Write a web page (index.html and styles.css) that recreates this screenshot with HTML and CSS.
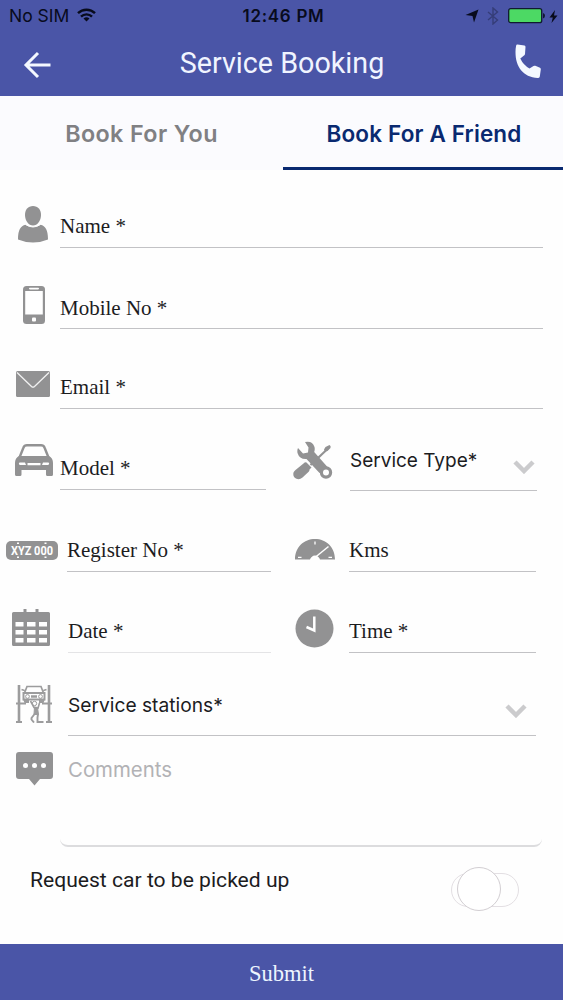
FILE: index.html
```html
<!DOCTYPE html>
<html lang="en">

<head>
    <meta charset="UTF-8">
    <meta name="viewport" content="width=device-width, initial-scale=1.0">
    <title>Service Booking</title>
    <link rel="stylesheet" href="styles.css">
</head>

<body>
    <header>
        <div class="status-bar">
            <div class="carrier">
                <span>No SIM</span>
                <svg width="19" height="14" viewBox="0 0 19 14" fill="none" stroke="#080b1c" stroke-width="2.4">
                    <path d="M1 5.2a12.2 12.2 0 0 1 17 0M4 8.6a7.8 7.8 0 0 1 11 0" />
                    <path d="M9.5 13.6l-3-3a4.3 4.3 0 0 1 6 0z" fill="#080b1c" stroke="none" />
                </svg>
            </div>
            <div class="clock">12:46 PM</div>
            <div class="indicators">
                <svg width="14" height="14" viewBox="0 0 14 14" fill="#080b1c">
                    <path d="M13.5 .5L9 13.5 7.5 7 .5 6z" />
                </svg>
                <svg class="bluetooth" width="12" height="18" viewBox="0 0 12 18" fill="none" stroke="#353d78" stroke-width="1.4">
                    <path d="M1 5l9.5 8L6 17V1l4.5 4L1 13" />
                </svg>
                <svg class="battery" width="37" height="16" viewBox="0 0 37 16">
                    <rect x=".7" y=".7" width="33" height="14" rx="2" fill="#4cd964" stroke="#101a30" stroke-width="1.3" />
                    <path d="M35 5q2 .5 2 2.700t-2 2.700z" fill="#101a30" />
                </svg>
                <svg width="9" height="13" viewBox="0 0 9 13" fill="#080b1c">
                    <path d="M6 0L.5 7.5h3.300L2.500 13l6-7.5H5z" />
                </svg>
            </div>
        </div>
        <div class="nav-bar">
            <svg class="back" width="28" height="28" viewBox="0 0 28 28" fill="none" stroke="#f4f8ff" stroke-width="3">
                <path d="M27.5 14H3M15 2L3 14l12 12" />
            </svg>
            <h1>Service Booking</h1>
            <svg class="call" width="26" height="36" viewBox="0 0 26 36" fill="#f4f8ff">
                <path d="M2.500 .5l7 1q1 .3 1 1.500l-.5 7q-.2 1-1 1.500l-3.700 3q3 6.500 9.200 10l4-2.500q.8-.6 1.800-.2l4.700 2q1 .5.8 1.600l-1 7q-.3 1.600-2 1.600C8 33 .5 23 .5 8q0-3.500.6-6.300Q1.300.4 2.500.5z" />
            </svg>
        </div>
    </header>

    <nav class="tabs">
        <a class="tab">Book For You</a>
        <a class="tab active">Book For A Friend</a>
    </nav>

    <form>
        <div class="row row-name">
            <div class="icon">
                <svg class="i-user" width="30" height="37" viewBox="0 0 30 37">
                    <path d="M15 0c5 0 8 3.500 8 9s-3.500 10.500-8 10.500S7 14.500 7 9s3-9 8-9z" />
                    <path d="M7.500 18.800q7.500 4.500 15 0c5 1.300 7.500 5 7.500 14.700Q23 36.500 15 36.500T0 33.500C0 24 2.500 20.100 7.500 18.800z" />
                    <path d="M7.500 18.500q7.500 5 15 0" fill="none" stroke="#fff" stroke-width="1" />
                </svg>
            </div>
            <div class="field">Name *</div>
        </div>

        <div class="row row-mobile">
            <div class="icon">
                <svg class="i-phone" width="22" height="38" viewBox="0 0 22 38">
                    <rect width="22" height="38" rx="3.500" />
                    <path d="M2.200 5h17.600v23.500H2.200z" fill="#fff" />
                    <rect x="6" y="1.800" width="10" height="1.600" rx=".8" fill="#fff" />
                    <rect x="9" y="31.500" width="4" height="4" rx="1" fill="#fff" />
                </svg>
            </div>
            <div class="field">Mobile No *</div>
        </div>

        <div class="row row-email">
            <div class="icon">
                <svg class="i-mail" width="34" height="26" viewBox="0 0 34 26">
                    <rect width="34" height="26" rx="1.500" />
                    <path d="M1 1.500l14.500 14q1.500 1.300 3 0L33 1.500" fill="none" stroke="#f2f2f2" stroke-width="1.300" />
                </svg>
            </div>
            <div class="field">Email *</div>
        </div>

        <div class="row row-model">
            <div class="icon">
                <svg class="i-car" width="38" height="32" viewBox="0 0 38 32">
                    <path d="M4.500 13.500L8.500 3.500Q9.300 1.300 12 1.300h14q2.700 0 3.500 2.200l4 10" fill="none" stroke="#929293" stroke-width="2.400" />
                    <path d="M4 12h30q4 2 4 7v11.500q0 1.500-1.500 1.500h-4q-1.500 0-1.500-1.500V26H6.500v4.500Q6.500 32 5 32H1.500Q0 32 0 30.500V19q0-5 4-7z" />
                    <path d="M4.500 18.500h5.500l1 2.500H5q-2-1-.5-2.500zM33.500 18.500H28L27 21h6q2-1 .5-2.500zM12.500 19h13v2.200h-13z" fill="#fff" />
                </svg>
            </div>
            <div class="field">Model *</div>
            <div class="icon">
                <svg class="i-tools" width="40" height="39" viewBox="0 0 40 39">
                    <path d="M35 7.500L17.500 24" fill="none" stroke="#929293" stroke-width="2.200" />
                    <path d="M31 8.500l1.500-2.500 4-2q1.800.8 1 3l-3 3-2.500.5z" />
                    <path d="M13.500 21.500l5 5-2 2q.2 1-.8 2.200L9.500 36.500q-3 2.500-6 1.300Q-.5 36 .5 31.500q.6-1.500 2-2.500l8-6.500q1.600-1.600 3-1z" />
                    <path d="M10 12.500l5-1L15.500 6.500 12 1Q19.500-.5 21.500 6q.6 2.500-.3 5L34.500 26l-8 6L13.500 18Q6.500 18.500 4.500 12 4 9 5 7z" />
                    <circle cx="33" cy="31.500" r="4.600" fill="#fff" stroke="#929293" stroke-width="3.2" />
                </svg>
            </div>
            <div class="field select">
                <span>Service Type*</span>
                <svg width="22" height="15" viewBox="0 0 22 15"><path d="M2 3l9 9 9-9" /></svg>
            </div>
        </div>

        <div class="row row-register">
            <div class="icon">
                <svg class="i-plate" width="52" height="19" viewBox="0 0 52 19">
                    <rect width="52" height="19" rx="5" />
                    <text x="26" y="13.800" text-anchor="middle" textLength="42" lengthAdjust="spacingAndGlyphs">XYZ 000</text>
                    <path d="M11 1.500h2v1.500h-2zM38.500 1.500h2v1.500h-2zM11 15.500h2V17h-2zM38.500 15.500h2V17h-2z" fill="#fff" />
                </svg>
            </div>
            <div class="field">Register No *</div>
            <div class="icon">
                <svg class="i-gauge" width="40" height="21" viewBox="0 0 40 21">
                    <path d="M0 20.500C0 8 9 0 20 0s20 8 20 20.500H25q-.6-3-5-3t-5 3z" />
                    <path d="M20 18.500L33.500 7.500" stroke="#fff" stroke-width="1.500" />
                    <path d="M3 18.300h3.500M33.500 18.300H37M20 2.500v3" stroke="#fff" stroke-width="1.300" />
                    <path d="M16 21q0-4.500 4-4.500t4 4.500z" fill="#fff" />
                </svg>
            </div>
            <div class="field">Kms</div>
        </div>

        <div class="row row-date">
            <div class="icon">
                <svg class="i-calendar" width="38" height="38" viewBox="0 0 38 38">
                    <path d="M1.500 4H11.500V1h3v3h9V1h3v3h10Q38 4 38 5.500v31q0 1.500-1.500 1.500h-35Q0 38 0 36.500v-31Q0 4 1.500 4z" />
                    <path d="M3.500 14h8v4.500h-8zM15 14h8.500v4.500H15zM27 14h8v4.500h-8zM3.500 22h8v4.500h-8zM15 22h8.500v4.500H15zM27 22h8v4.500h-8zM3.500 30h8v4.500h-8zM15 30h8.500v4.500H15zM27 30h8v4.500h-8z" fill="#fff" />
                </svg>
            </div>
            <div class="field faint">Date *</div>
            <div class="icon">
                <svg class="i-clock" width="39" height="39" viewBox="0 0 39 39">
                    <circle cx="19.500" cy="19.500" r="19" />
                    <path d="M19.300 7.500v14L11.500 18" fill="none" stroke="#fff" stroke-width="2.500" />
                </svg>
            </div>
            <div class="field">Time *</div>
        </div>

        <div class="row row-stations">
            <div class="icon">
                <svg class="i-lift" width="36" height="38" viewBox="0 0 36 38" fill="none" stroke="#9c9c9d">
                    <path d="M3 0v37M33 0v37" stroke-width="2.600" />
                    <path d="M0 37h6M30 37h6" stroke-width="2" />
                    <path d="M0 18.500h10M36 18.500H26" stroke-width="1.800" />
                    <path d="M8.500 8l2.500-6.500h14l2.500 6.500M5.500 4.500l3 1M30.500 4.500l-3 1" stroke-width="1.700" />
                    <path d="M7.500 8h21v6.500h-21z" stroke-width="2" />
                    <path d="M7 14h6v4H8.500zM23 14h6l-1.500 4H23z" fill="#9c9c9d" stroke="none" />
                    <circle cx="11.500" cy="11.500" r="1.900" />
                    <circle cx="24.500" cy="11.500" r="1.900" />
                    <path d="M15 11.500h6" stroke-width="2.500" />
                    <circle cx="18.500" cy="18.500" r="2.200" />
                    <path d="M14.500 16l3.500 6.500 4 .5 1.500-5" stroke-width="1.600" />
                    <path d="M18.500 22l3 .5 1 7h-4.500z" fill="#9c9c9d" />
                    <path d="M19 28.500l-3.500 4.500v1.500l2.500 3M22 29l-.5 3.500v4.500h6" stroke-width="1.900" />
                </svg>
            </div>
            <div class="field select">
                <span>Service stations*</span>
                <svg width="22" height="15" viewBox="0 0 22 15"><path d="M2 3l9 9 9-9" /></svg>
            </div>
        </div>

        <div class="row row-comments">
            <div class="icon">
                <svg class="i-comment" width="37" height="34" viewBox="0 0 37 34">
                    <path d="M3 0h31q3 0 3 3v21q0 3-3 3H24l-5.500 6.500L13 27H3q-3 0-3-3V3q0-3 3-3z" />
                    <g fill="#fff">
                        <circle cx="9.500" cy="13.500" r="2.500" />
                        <circle cx="18.500" cy="13.500" r="2.500" />
                        <circle cx="27.500" cy="13.500" r="2.500" />
                    </g>
                </svg>
            </div>
            <div class="comments">Comments</div>
        </div>

        <div class="pickup">
            <span>Request car to be picked up</span>
            <div class="switch">
                <div class="knob"></div>
            </div>
        </div>

        <button type="button" class="submit">Submit</button>
    </form>
</body>

</html>
```
FILE: styles.css
```css
:root {
    --primary-color: #4a55a7;
    --navy: #092970;
    --icon-color: #929293;
    --line-color: #c2c2c5;
}

* {
    margin: 0;
    padding: 0;
    box-sizing: border-box;
}

body {
    width: 563px;
    height: 1000px;
    overflow: hidden;
    background-color: #fefefe;
    color: #1c1c1e;
    font-family: Inter, "Liberation Sans", sans-serif;
}

svg {
    display: block;
    flex: none;
}

header {
    height: 96px;
    background-color: var(--primary-color);
}

/* Status bar */
.status-bar {
    height: 32px;
    display: grid;
    grid-template-columns: 1fr auto 1fr;
    align-items: center;
    padding: 0 5px 0 9px;
    color: #080b1c;
    font-size: 17px;
}

.carrier {
    display: flex;
    align-items: center;
    gap: 8px;
    margin-bottom: 2px;
    font-size: 17.5px;
}

.clock {
    font-weight: 600;
    letter-spacing: 0.7px;
}

.indicators {
    display: flex;
    align-items: center;
    justify-content: flex-end;
}

.bluetooth {
    margin: 0 9px 0 8px;
}

.battery {
    margin-right: 4px;
}

.nav-bar {
    height: 64px;
    display: grid;
    grid-template-columns: 1fr auto 1fr;
    align-items: center;
    padding: 0 22px 0 23px;
}

.nav-bar h1 {
    font-family: Roboto, sans-serif;
    font-size: 28.7px;
    font-weight: 400;
    color: #f0f4ff;
    margin-bottom: 3px;
}

.back {
    margin-top: 2px;
}

.call {
    justify-self: end;
    margin-bottom: 4px;
}

/* Tabs */
.tabs {
    height: 74px;
    display: grid;
    grid-template-columns: 283px 280px;
    background-color: #fbfbfe;
}

.tab {
    padding-top: 22px;
    text-align: center;
    font-size: 23.3px;
    line-height: 31px;
    font-weight: 600;
    letter-spacing: 0.4px;
    color: #808083;
}

.tab.active {
    padding-left: 2px;
    font-size: 22.5px;
    letter-spacing: 0.15px;
    color: var(--navy);
    border-bottom: 3px solid var(--navy);
}

/* Form rows */
.row {
    display: grid;
    align-items: end;
    grid-template-columns: 60px 483px;
}

.icon {
    fill: var(--icon-color);
}

.field {
    height: 37px;
    border-bottom: 1px solid var(--line-color);
    font-family: "Liberation Serif", serif;
    font-size: 21px;
    line-height: 31px;
}

.faint {
    border-bottom-color: #e4e4e6;
}

.select {
    display: flex;
    justify-content: space-between;
    font-family: Inter, sans-serif;
    font-size: 19px;
    line-height: 32px;
}

.select svg {
    fill: none;
    stroke: #cbcbcd;
    stroke-width: 4.5;
}

.row-name { height: 78px; }
.row-mobile { height: 81px; }
.row-email { height: 80px; }

.row-mobile .field {
    line-height: 32px;
}

.row-model {
    height: 82px;
    grid-template-columns: 60px 206px 84px 187px;
}

.row-register {
    height: 81px;
    grid-template-columns: 67px 204px 78px 187px;
}

.row-date {
    height: 81px;
    grid-template-columns: 68px 203px 78px 187px;
}

.row-stations {
    height: 83px;
    grid-template-columns: 68px 468px;
}

.row-model .field:not(.select) {
    margin-bottom: 1px;
}

.row-model .select {
    height: 46px;
}

.row-model .select svg {
    margin: 14px 2px 0 0;
}

.row-stations .select {
    height: 47px;
    font-size: 19.2px;
}

.row-stations .select svg {
    margin: 14px 9px 0 0;
}

.i-user { margin: 0 0 5px 18px; }
.i-phone { margin: 0 0 5px 23px; }
.i-mail { margin: 0 0 12px 16px; }
.i-car { margin: 0 0 15px 15px; }
.i-tools { margin: 0 0 11px 27px; }
.i-plate { margin: 0 0 12px 6px; overflow: visible; }
.i-gauge { margin: 0 0 12px 24px; }
.i-calendar { margin: 0 0 7px 12px; }
.i-clock { margin: 0 0 5px 24px; }
.i-lift { margin: 0 0 13px 16px; }
.i-comment { margin: 16px 0 0 16px; }

.i-plate text {
    fill: #fff;
    font: bold 12.5px Roboto, sans-serif;
}

/* Comments */
.row-comments {
    height: 111px;
    align-items: stretch;
    grid-template-columns: 60px 482px;
}

.comments {
    padding: 18px 8px 0;
    border-bottom: 2px solid #dcdcde;
    border-radius: 0 0 8px 8px;
    font-size: 20.4px;
    line-height: 31px;
    color: #b2b2b5;
}

.pickup {
    height: 97px;
    display: flex;
    justify-content: space-between;
    padding: 18px 44px 0 30px;
    font-family: Roboto, sans-serif;
    font-size: 21.1px;
    line-height: 29px;
}

.switch {
    position: relative;
    width: 68px;
    height: 34px;
    margin-top: 8px;
    border: 1px solid #e3dfe3;
    border-radius: 17px;
}

.knob {
    position: absolute;
    top: -7px;
    left: 5px;
    width: 44px;
    height: 44px;
    border: 1px solid #d2ced2;
    border-radius: 50%;
    background-color: #fff;
}

.submit {
    display: block;
    width: 100%;
    height: 56px;
    border: none;
    padding-top: 4px;
    background-color: var(--primary-color);
    color: #edf5ff;
    font-family: "Liberation Serif", serif;
    font-size: 22.5px;
}
```
